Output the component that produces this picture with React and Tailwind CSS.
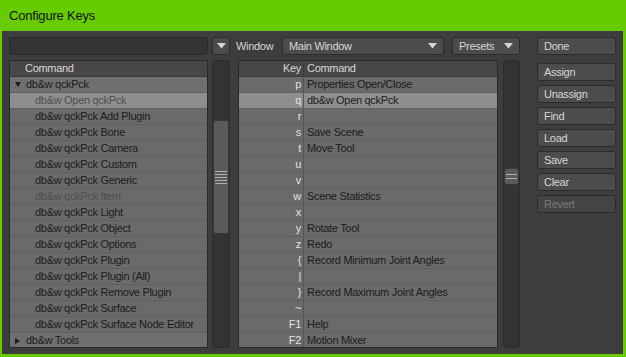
import React from "react";

const leftRows = [
  { t: "db&w qckPck", group: "open" },
  { t: "db&w Open qckPck", dis: true, sel: true },
  { t: "db&w qckPck Add Plugin" },
  { t: "db&w qckPck Bone" },
  { t: "db&w qckPck Camera" },
  { t: "db&w qckPck Custom" },
  { t: "db&w qckPck Generic" },
  { t: "db&w qckPck Item", dis: true },
  { t: "db&w qckPck Light" },
  { t: "db&w qckPck Object" },
  { t: "db&w qckPck Options" },
  { t: "db&w qckPck Plugin" },
  { t: "db&w qckPck Plugin (All)" },
  { t: "db&w qckPck Remove Plugin" },
  { t: "db&w qckPck Surface" },
  { t: "db&w qckPck Surface Node Editor" },
  { t: "db&w Tools", group: "closed" },
];

const rightRows = [
  ["p", "Properties Open/Close"],
  ["q", "db&w Open qckPck", true],
  ["r", ""],
  ["s", "Save Scene"],
  ["t", "Move Tool"],
  ["u", ""],
  ["v", ""],
  ["w", "Scene Statistics"],
  ["x", ""],
  ["y", "Rotate Tool"],
  ["z", "Redo"],
  ["{", "Record Minimum Joint Angles"],
  ["|", ""],
  ["}", "Record Maximum Joint Angles"],
  ["~", ""],
  ["F1", "Help"],
  ["F2", "Motion Mixer"],
];

function Tri() {
  return (
    <svg width="9" height="6" viewBox="0 0 9 6" className="shrink-0">
      <path d="M0 0 H9 L4.5 5.5 Z" fill="#d4d4d4" />
    </svg>
  );
}

function Btn({ children, dis }) {
  return (
    <div
      className={`h-[18px] rounded-[3px] border border-[#2c2c2c] flex items-center pl-[6px] text-[11px] tracking-[-0.3px] whitespace-nowrap ${
        dis ? "bg-[#444444] text-[#787878]" : "bg-[#4c4c4c] text-[#d6d6d6]"
      }`}
    >
      {children}
    </div>
  );
}

export default function App() {
  const font = { fontFamily: '"Liberation Sans", Arial, sans-serif' };
  return (
    <div
      className="w-[626px] h-[357px] bg-[#66cc00] flex flex-col overflow-hidden"
      style={font}
    >
      <div className="h-[31px] pl-[9px] flex items-center text-[13px] text-[#111] tracking-[-0.2px]">
        Configure Keys
      </div>
      <div className="flex-1 ml-[2px] mr-[3px] mb-[3px] bg-[#3d3d3d] flex pl-[7px] pr-[7px] pt-[6px] pb-[6px] gap-[17px] text-[11px] tracking-[-0.3px] whitespace-nowrap">
        <div className="w-[511px] flex flex-col gap-[5px]">
          {/* top row */}
          <div className="h-[18px] flex items-center">
            <div className="w-[199px] h-[18px] rounded-[3px] bg-[#333333] border border-[#2a2a2a]" />
            <div className="ml-[4px] w-[18px] h-[18px] rounded-[3px] bg-[#4c4c4c] border border-[#2c2c2c] flex items-center justify-center">
              <Tri />
            </div>
            <div className="ml-[6px] text-[#d6d6d6] w-[40px]">Window</div>
            <div className="ml-[6px] w-[162px] h-[18px] rounded-[3px] bg-[#4c4c4c] border border-[#2c2c2c] flex items-center justify-between pl-[6px] pr-[6px] text-[#d6d6d6]">
              <span>Main Window</span>
              <Tri />
            </div>
            <div className="ml-[8px] w-[68px] h-[18px] rounded-[3px] bg-[#4c4c4c] border border-[#2c2c2c] flex items-center justify-between pl-[6px] pr-[6px] text-[#d6d6d6]">
              <span>Presets</span>
              <Tri />
            </div>
          </div>
          {/* lists row */}
          <div className="h-[288px] flex">
            {/* left list */}
            <div className="w-[199px] h-full border border-[#2a2a2a] bg-[#6a6a6a] flex flex-col overflow-hidden">
              <div className="h-[16px] shrink-0 bg-[#474747] text-[#d6d6d6] flex items-center pl-[15px] border-b border-[#3a3a3a]">
                Command
              </div>
              {leftRows.map((r, i) => (
                <div
                  key={i}
                  className={`h-[16px] shrink-0 flex items-center border-b border-[#5f5f5f] ${
                    r.sel ? "bg-[#8e8e8e]" : r.group ? "bg-[#6f6f6f]" : "bg-[#6a6a6a]"
                  } ${r.dis ? "text-[#4e4e4e]" : "text-[#1c1c1c]"} ${r.group ? "pl-[3px]" : "pl-[25px]"}`}
                >
                  {r.group === "open" && (
                    <svg width="10" height="8" viewBox="0 0 10 8" className="mr-[3px] shrink-0">
                      <path d="M2 1 H8 L5 6 Z" fill="#1c1c1c" />
                    </svg>
                  )}
                  {r.group === "closed" && (
                    <svg width="10" height="8" viewBox="0 0 10 8" className="mr-[3px] shrink-0">
                      <path d="M2 1 L7 4 L2 7 Z" fill="#1c1c1c" />
                    </svg>
                  )}
                  {r.t}
                </div>
              ))}
            </div>
            {/* left scrollbar */}
            <div className="ml-[4px] w-[18px] h-full rounded-[4px] bg-[#333333] border border-[#2c2c2c] relative">
              <div className="absolute left-0 right-0 top-[59px] h-[114px] rounded-[3px] bg-[#5a5a5a] border border-[#3a3a3a] flex flex-col items-center justify-center gap-[2px]">
                {[0, 1, 2, 3, 4].map((k) => (
                  <div key={k} className="w-[12px] h-[1px] bg-[#b0b0b0]" />
                ))}
              </div>
            </div>
            {/* right list */}
            <div className="ml-[8px] w-[260px] h-full border border-[#2a2a2a] bg-[#6a6a6a] flex flex-col overflow-hidden">
              <div className="h-[16px] shrink-0 bg-[#474747] text-[#d6d6d6] flex items-center border-b border-[#3a3a3a]">
                <div className="w-[65px] pr-[2px] border-r border-[#3a3a3a] h-full flex items-center justify-end">Key</div>
                <div className="pl-[3px]">Command</div>
              </div>
              {rightRows.map(([k, c, sel], i) => (
                <div
                  key={i}
                  className={`h-[16px] shrink-0 flex items-center border-b border-[#5f5f5f] ${
                    sel ? "bg-[#8e8e8e]" : "bg-[#6a6a6a]"
                  }`}
                >
                  <div className="w-[65px] h-full flex items-center justify-end pr-[2px] text-[#e2e2e2] border-r border-[#545454]">
                    {k}
                  </div>
                  <div className="pl-[3px] text-[#1c1c1c]">{c}</div>
                </div>
              ))}
            </div>
            {/* right scrollbar */}
            <div className="ml-[5px] w-[17px] h-full rounded-[4px] bg-[#333333] border border-[#2c2c2c] relative">
              <div className="absolute left-0 right-0 top-[107px] h-[17px] rounded-[3px] bg-[#5a5a5a] border border-[#3a3a3a] flex flex-col items-center justify-center gap-[3px]">
                <div className="w-[11px] h-[1px] bg-[#b0b0b0]" />
                <div className="w-[11px] h-[1px] bg-[#b0b0b0]" />
              </div>
            </div>
          </div>
        </div>
        {/* right button column */}
        <div className="w-[79px] flex flex-col">
          <Btn>Done</Btn>
          <div className="mt-[8px] flex flex-col gap-[4px]">
            <Btn>Assign</Btn>
            <Btn>Unassign</Btn>
            <Btn>Find</Btn>
            <Btn>Load</Btn>
            <Btn>Save</Btn>
            <Btn>Clear</Btn>
            <Btn dis>Revert</Btn>
          </div>
        </div>
      </div>
    </div>
  );
}
